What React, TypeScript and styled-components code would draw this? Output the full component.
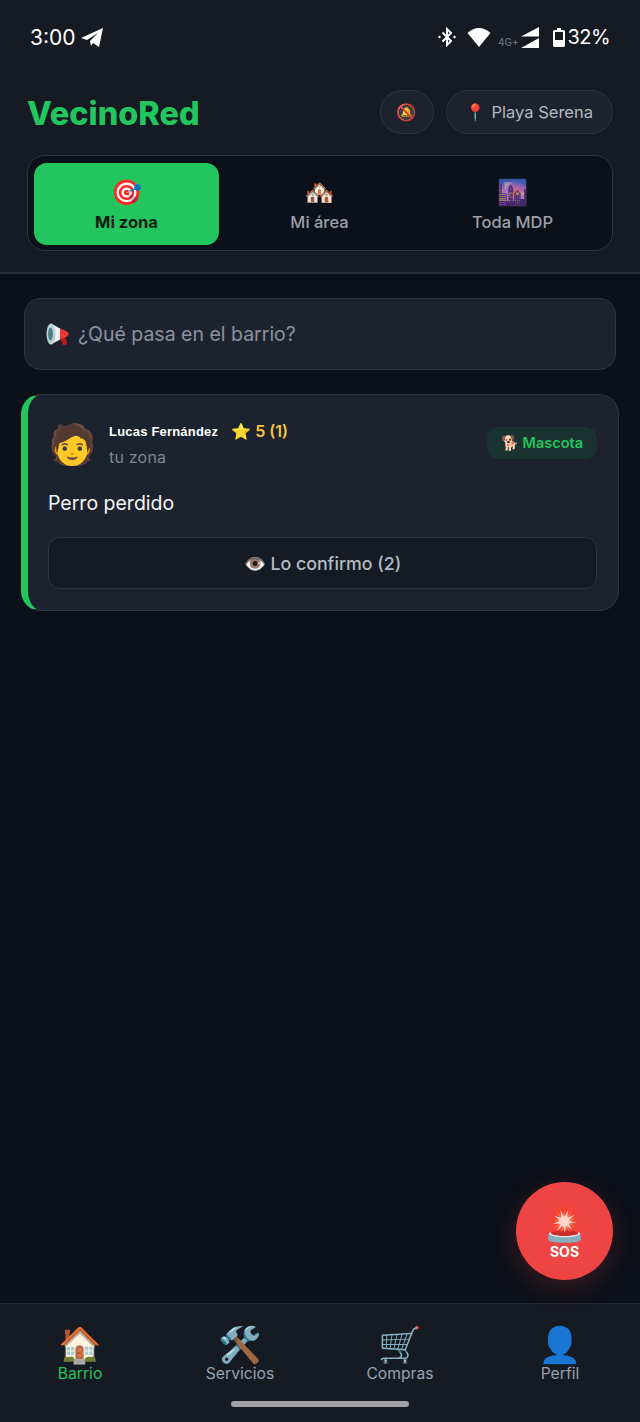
import React from "react";
import styled, { createGlobalStyle } from "styled-components";

const GREEN = "#22c55e";
const FONT = `"Inter", "Noto Sans", sans-serif`;

const Global = createGlobalStyle`
  html, body { margin: 0; padding: 0; background: #0c1018; }
  * { box-sizing: border-box; }
  body { font-family: ${FONT}; }
`;

const Page = styled.div`
  position: relative;
  width: 640px;
  height: 1422px;
  display: flex;
  flex-direction: column;
  background: #0c1018;
  overflow: hidden;
`;
const Top = styled.header`
  height: 274px;
  background: #151a23;
  border-bottom: 2px solid #262d39;
  padding: 0 27px;
`;
const StatusBar = styled.div`
  height: 74px;
  margin: 0 3px;
  display: flex;
  align-items: center;
  justify-content: space-between;
  color: #fff;
  font-size: 21px;
`;
const StatusGroup = styled.div`
  display: flex;
  align-items: center;
`;
const StatusIcon = styled.svg<{ $ml?: number }>`
  display: block;
  flex: none;
  margin-left: ${({ $ml }) => $ml || 0}px;
`;
const Network = styled.span`
  margin: 9px 2px 0 7px;
  font-size: 10px;
  font-weight: 500;
  color: #6d727b;
`;
const Percent = styled.span`
  margin-left: 3px;
  font-size: 20px;
  letter-spacing: -0.6px;
`;
const TitleRow = styled.div`
  height: 76px;
  margin-bottom: 5px;
  display: flex;
  align-items: center;
  justify-content: space-between;
`;
const Logo = styled.h1`
  margin: 3px 0 0;
  font-size: 32.4px;
  font-weight: 800;
  color: ${GREEN};
`;
const Actions = styled.div`
  display: flex;
  gap: 12px;
`;
const Pill = styled.div<{ $round?: boolean }>`
  height: 44px;
  width: ${({ $round }) => ($round ? "54px" : "auto")};
  padding: ${({ $round }) => ($round ? "0" : "0 19px 0 18px")};
  display: flex;
  align-items: center;
  justify-content: center;
  gap: 6px;
  border-radius: 22px;
  background: #1d232e;
  border: 1px solid #2d3542;
  color: #b4bac4;
  font-size: 16.5px;
`;
const Tabs = styled.div`
  height: 96px;
  padding: 7px 6px 5px;
  display: grid;
  grid-template-columns: repeat(3, 185px);
  gap: 8px;
  border-radius: 18px;
  background: #0c1018;
  border: 1px solid #2d3542;
`;
const Tab = styled.div<{ $active?: boolean }>`
  display: flex;
  flex-direction: column;
  align-items: center;
  justify-content: center;
  gap: 5px;
  border-radius: 13px;
  background: ${({ $active }) => ($active ? GREEN : "transparent")};
  color: ${({ $active }) => ($active ? "#0d1f14" : "#9aa1ad")};
  font-size: 16.5px;
  font-weight: ${({ $active }) => ($active ? 700 : 500)};
`;
const TabIcon = styled.span`
  font-size: 25px;
  line-height: 30px;
`;
const Main = styled.main`
  flex: 1;
  padding: 24px 21px 0;
  display: flex;
  flex-direction: column;
  gap: 24px;
`;
const Composer = styled.div`
  height: 72px;
  margin: 0 3px;
  padding: 0 21px;
  display: flex;
  align-items: center;
  gap: 7px;
  border-radius: 16px;
  background: #1d232e;
  border: 1px solid #2d3542;
  color: #8b92a0;
  font-size: 19.5px;
`;
const Card = styled.article`
  padding: 26px 21px 21px 20px;
  border-radius: 20px;
  background: #1d232e;
  border: 1px solid #2d3542;
  border-left: 7px solid ${GREEN};
  display: flex;
  flex-direction: column;
`;
const CardHead = styled.div`
  display: flex;
  align-items: center;
  justify-content: space-between;
`;
const Author = styled.div`
  display: flex;
  align-items: center;
  gap: 15px;
`;
const Avatar = styled.span`
  width: 46px;
  font-size: 39px;
  line-height: 46px;
  text-align: center;
`;
const AuthorText = styled.div`
  display: flex;
  flex-direction: column;
  gap: 6px;
`;
const NameRow = styled.div`
  display: flex;
  align-items: center;
  gap: 13px;
`;
const Name = styled.span`
  font-family: "Liberation Sans", sans-serif;
  font-size: 13px;
  letter-spacing: 0.2px;
  font-weight: 700;
  color: #fff;
`;
const Rating = styled.span`
  font-size: 16px;
  font-weight: 600;
  color: #f5c542;
`;
const Place = styled.span`
  font-size: 16px;
  letter-spacing: 0.2px;
  color: #7f8694;
`;
const Tag = styled.span`
  height: 32px;
  margin-top: -2px;
  padding: 0 14px;
  display: flex;
  align-items: center;
  gap: 5px;
  border-radius: 12px;
  background: #1b3330;
  color: ${GREEN};
  font-size: 14.5px;
  font-weight: 600;
`;
const Body = styled.p`
  margin: 24px 0 22px;
  font-size: 19.5px;
  line-height: 24px;
  color: #f4f5f7;
`;
const Confirm = styled.div`
  flex: none;
  height: 52px;
  display: flex;
  align-items: center;
  justify-content: center;
  gap: 6px;
  border-radius: 12px;
  background: #151a23;
  border: 1px solid #2d3542;
  color: #b4bac4;
  font-size: 17.8px;
  font-weight: 500;
`;
const Sos = styled.div`
  position: absolute;
  left: 516px;
  top: 1182px;
  width: 97px;
  height: 98px;
  padding-top: 2px;
  border-radius: 50%;
  background: #ef4444;
  box-shadow: 0 8px 24px rgba(239, 68, 68, 0.2);
  display: flex;
  flex-direction: column;
  align-items: center;
  justify-content: center;
  color: #fff;
  font-size: 14px;
  font-weight: 700;
`;
const SosIcon = styled.span`
  font-size: 33px;
  line-height: 38px;
`;
const Nav = styled.nav`
  height: 119px;
  padding-top: 20px;
  display: grid;
  grid-template-columns: repeat(4, 1fr);
  align-items: start;
  background: #151a23;
  border-top: 1px solid #232a35;
`;
const NavItem = styled.div<{ $active?: boolean }>`
  display: flex;
  flex-direction: column;
  align-items: center;
  color: ${({ $active }) => ($active ? GREEN : "#9aa1ad")};
  font-size: 15.7px;
`;
const NavIcon = styled.span`
  font-size: 35px;
  line-height: 40px;
`;
const HomeBar = styled.div`
  position: absolute;
  left: 231px;
  top: 1401px;
  width: 178px;
  height: 6px;
  border-radius: 3px;
  background: #a1a1a6;
`;

function Megaphone() {
  return (
    <svg width="25" height="24" viewBox="0 0 25 24">
      <path d="M14 16 19 14 21 20Q21.500 22.500 19 23L17 23Z" fill="#b71c1c" />
      <path d="M12 5.500 21 9.500Q24.500 12 21 14.500L12 18.500Z" fill="#e53935" />
      <path d="M5 1.500 14 6.500V17.500L5 22.500Z" fill="#f1f1f1" />
      <ellipse cx="5" cy="12" rx="4.500" ry="10.500" fill="#b9d3d6" />
      <ellipse cx="4.500" cy="12" rx="2.400" ry="6.500" fill="#4f7d84" />
    </svg>
  );
}

export default function App() {
  return (
    <Page>
      <Global />
      <Top>
        <StatusBar>
          <StatusGroup>
            <span>3:00</span>
            <StatusIcon $ml={5} width="23" height="21" viewBox="0 0 23 21">
              <path d="M0 11 22 1 18 20 12 16 10 19 9 14 17 6 6 13Z" fill="#fff" />
            </StatusIcon>
          </StatusGroup>
          <StatusGroup>
            <StatusIcon width="18" height="20" viewBox="0 0 18 20" fill="none" stroke="#fff" strokeWidth="2">
              <path d="M4.500 5.500 13 14 9 18V2L13 6 4.500 14.500" />
              <circle cx="1.500" cy="10" r="1.200" fill="#fff" stroke="none" />
              <circle cx="16.500" cy="10" r="1.200" fill="#fff" stroke="none" />
            </StatusIcon>
            <StatusIcon $ml={11} width="24" height="20" viewBox="0 0 24 20">
              <path d="M0.500 6Q12-4 23.500 6L12 20Z" fill="#fff" />
            </StatusIcon>
            <Network>4G+</Network>
            <StatusIcon width="18" height="21" viewBox="0 0 18 21">
              <path d="M0 9.500 18 0V9.500ZM0 21 18 11V21Z" fill="#fff" />
            </StatusIcon>
            <StatusIcon $ml={14} width="12" height="19" viewBox="0 0 12 19">
              <path d="M4 0H8V2H10.500Q12 2 12 3.500V17.500Q12 19 10.500 19H1.500Q0 19 0 17.500V3.500Q0 2 1.500 2H4ZM2 4V17H10V4Z" fill="#fff" />
              <path d="M2 12H10V17H2Z" fill="#fff" />
            </StatusIcon>
            <Percent>32%</Percent>
          </StatusGroup>
        </StatusBar>
        <TitleRow>
          <Logo>VecinoRed</Logo>
          <Actions>
            <Pill $round>🔕</Pill>
            <Pill><span>📍</span><span>Playa Serena</span></Pill>
          </Actions>
        </TitleRow>
        <Tabs>
          <Tab $active><TabIcon>🎯</TabIcon>Mi zona</Tab>
          <Tab><TabIcon>🏘️</TabIcon>Mi área</Tab>
          <Tab><TabIcon>🌆</TabIcon>Toda MDP</Tab>
        </Tabs>
      </Top>
      <Main>
        <Composer><Megaphone /><span>¿Qué pasa en el barrio?</span></Composer>
        <Card>
          <CardHead>
            <Author>
              <Avatar>🧑</Avatar>
              <AuthorText>
                <NameRow><Name>Lucas Fernández</Name><Rating>⭐ 5 (1)</Rating></NameRow>
                <Place>tu zona</Place>
              </AuthorText>
            </Author>
            <Tag>🐕 Mascota</Tag>
          </CardHead>
          <Body>Perro perdido</Body>
          <Confirm>👁️ Lo confirmo (2)</Confirm>
        </Card>
      </Main>
      <Sos><SosIcon>🚨</SosIcon>SOS</Sos>
      <Nav>
        <NavItem $active><NavIcon>🏠</NavIcon>Barrio</NavItem>
        <NavItem><NavIcon>🛠️</NavIcon>Servicios</NavItem>
        <NavItem><NavIcon>🛒</NavIcon>Compras</NavItem>
        <NavItem><NavIcon>👤</NavIcon>Perfil</NavItem>
      </Nav>
      <HomeBar />
    </Page>
  );
}
